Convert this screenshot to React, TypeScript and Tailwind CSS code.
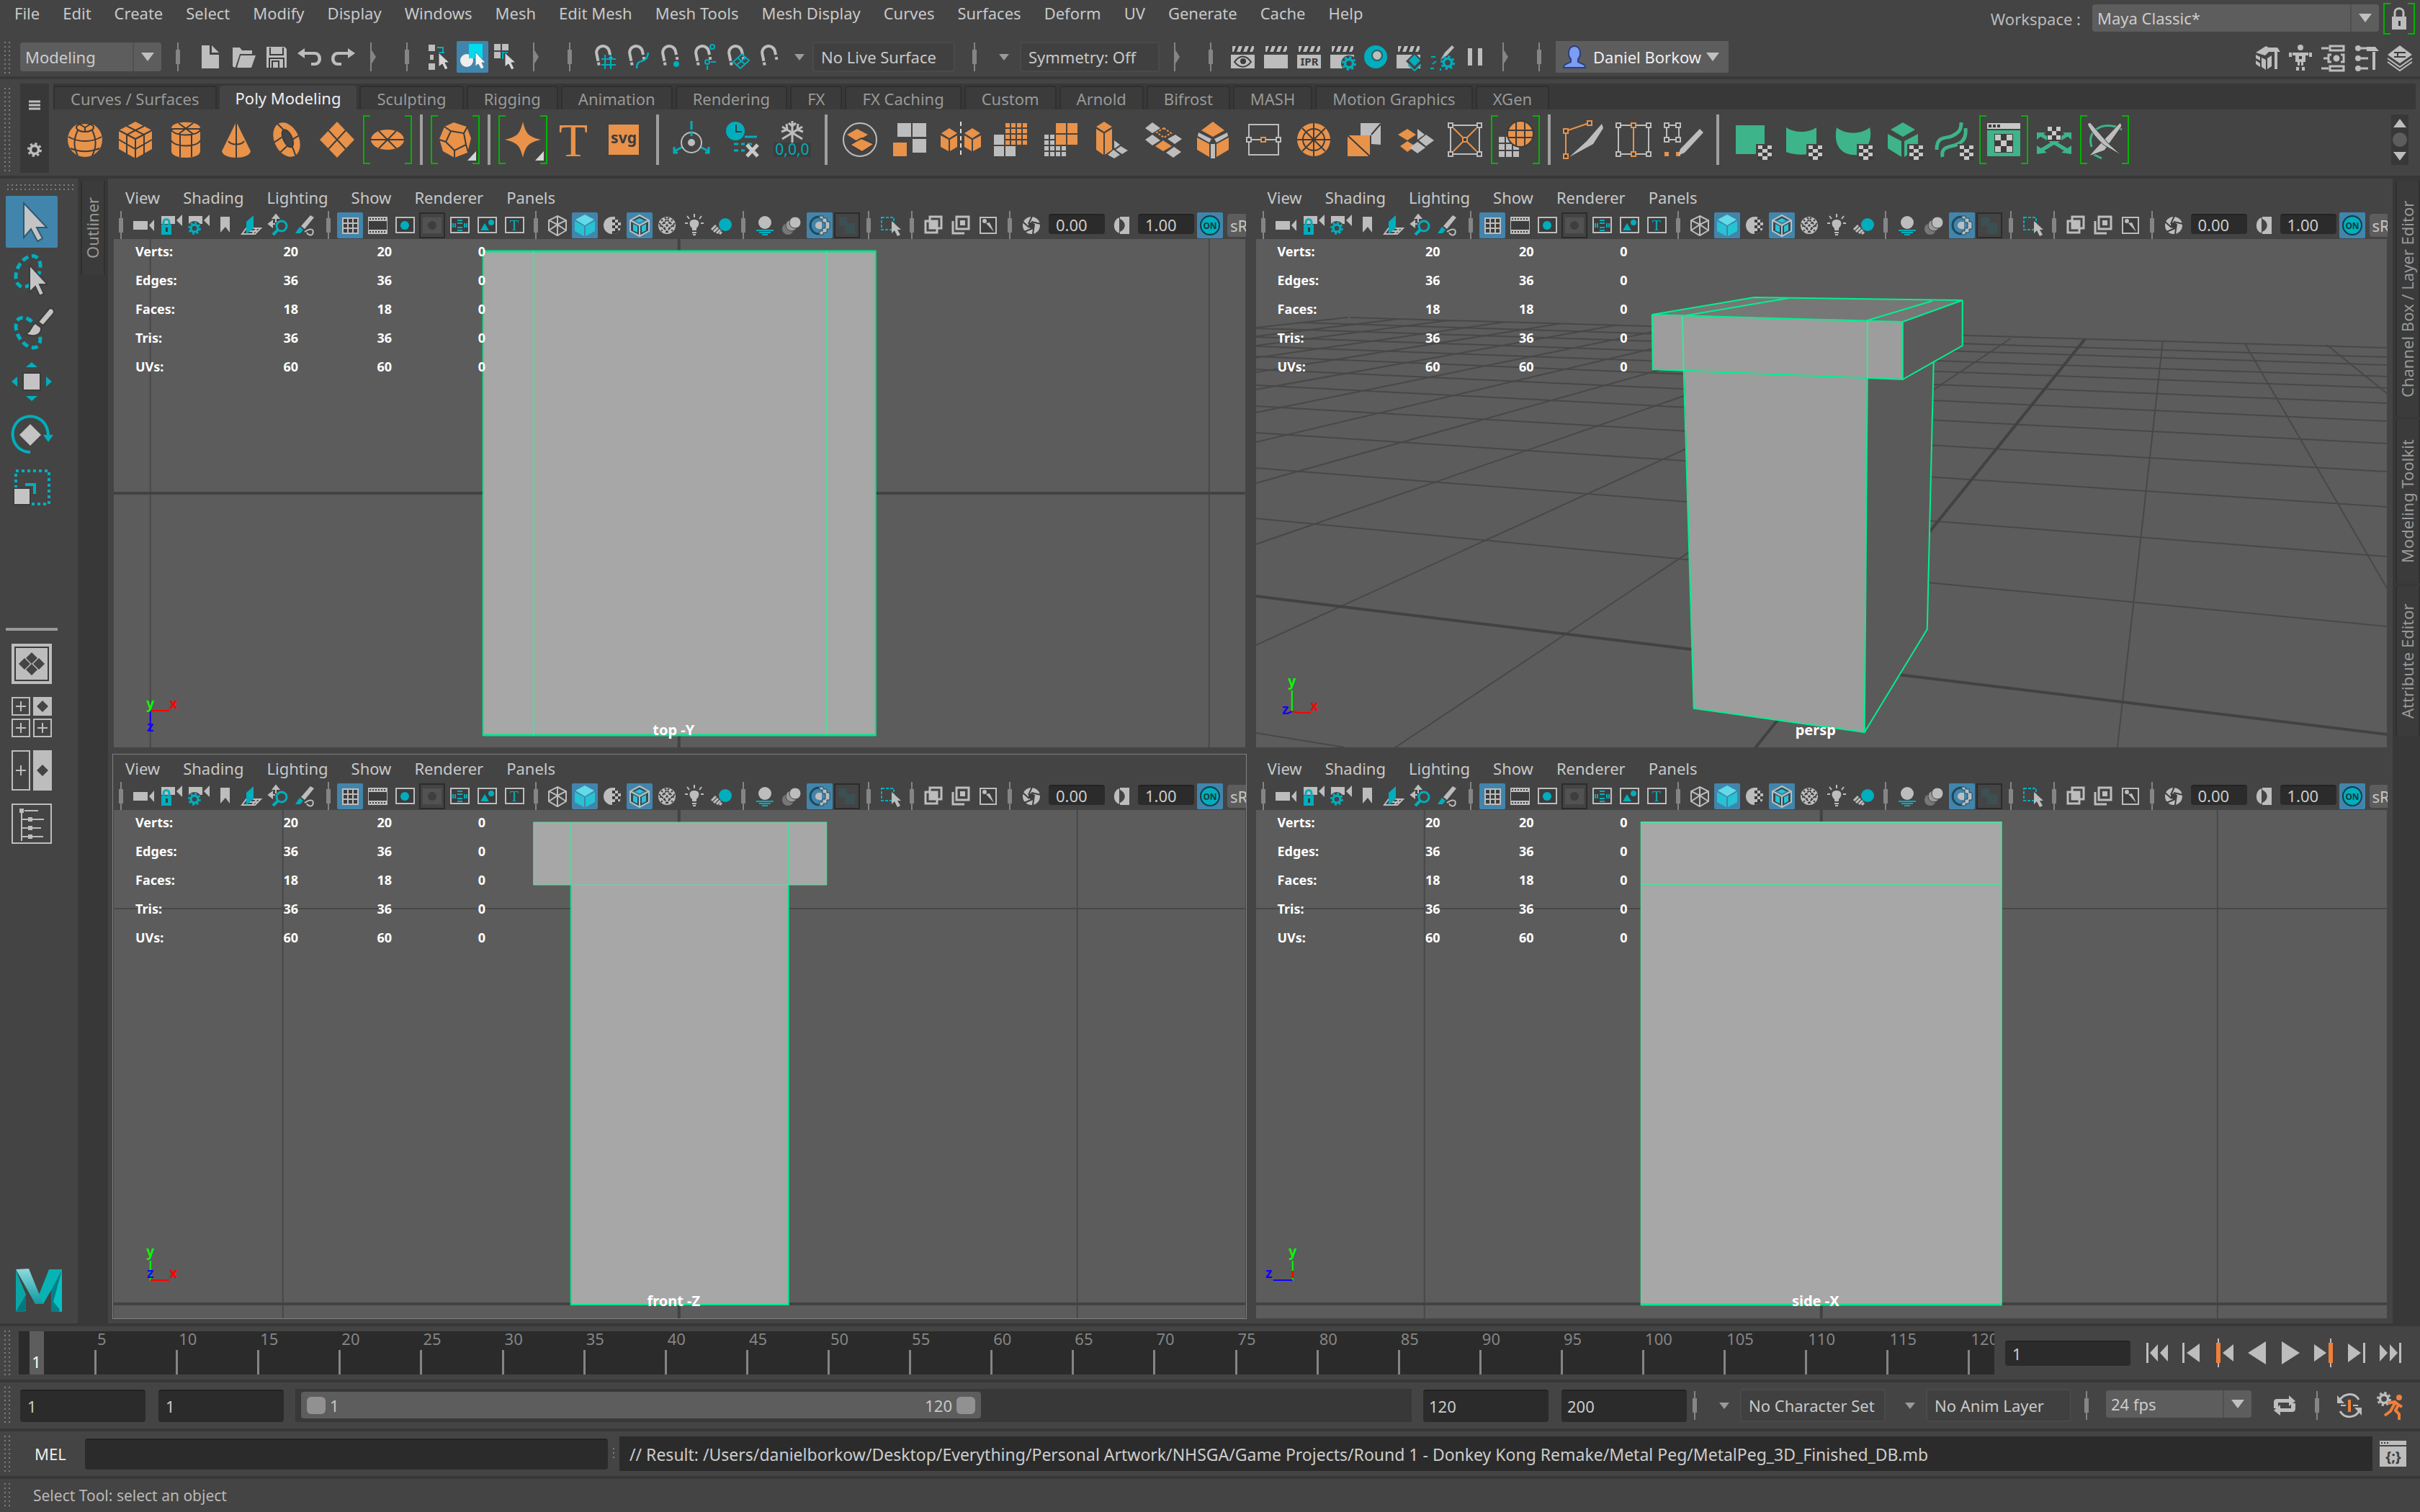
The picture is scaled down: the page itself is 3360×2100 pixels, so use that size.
import type { ReactNode } from "react";
import clsx from "clsx";

const G = "#bdbdbd";
const T = "#00aebd";
const O = "#e8924a";
const D = "#3c3c3c";
const U = "#3db489";

/* ---------- status line icons, 40 x 40 ---------- */

const clap = (
  <>
    <path d="M4 5h31v9H4z" fill={D} />
    <path d="M5 5h5l-3 8H5zM14 5h5l-3 8h-5zM23 5h5l-3 8h-5zM32 5h3v4l-2 4h-4z" fill={G} />
    <path d="M3 17h33v19H3z" fill={G} />
  </>
);

const cursor = <path d="M19 14v20l5-4 4 8 4-2-4-8h6z" fill="#d6d6d6" stroke={D} strokeWidth="1" />;

const magnet = (
  <g transform="rotate(-12 18 18)">
    <path d="M9 24V14a9 9 0 0 1 18 0v5" fill="none" stroke={G} strokeWidth="4" />
    <path d="M7 26h4v4H7zM25 22h4v4h-4z" fill={G} />
  </g>
);

const gear = (cx: number, cy: number, r: number, color: string) => (
  <g fill="none" stroke={color}>
    <circle cx={cx} cy={cy} r={r * 0.62} strokeWidth={r * 0.4} />
    <circle cx={cx} cy={cy} r={r * 0.95} strokeWidth={r * 0.32} strokeDasharray={`${r * 0.37} ${r * 0.376}`} />
  </g>
);

const status: Record<string, ReactNode> = {
  new: <path d="M8 4h11v13h13v19H8zM22 4l10 10H22z" fill={G} />,
  open: <path d="M5 7h10l3 4h14v5H15L9 34l-1 1-3-2zM16 18h21l-6 17H11z" fill={G} />,
  save: (
    <>
      <path d="M6 6h25l3 3v26H6z" fill={G} />
      <path d="M11 7v10h18V7M10 36V22h20v14M14 35v-9h9v9" fill="none" stroke={D} strokeWidth="2" />
    </>
  ),
  undo: <path d="M3 15l10-7v5h14c12 0 12 19 0 19h-5v-4h5c6 0 6-11 0-11H13v5z" fill={G} />,
  redo: <path d="M37 15L27 8v5H13C1 13 1 32 13 32h5v-4h-5c-6 0-6-11 0-11h14v5z" fill={G} />,
  hier: (
    <>
      <path d="M5 3h9v9H5zM5 29h9v9H5zM7 17h5v7H7z" fill={G} />
      <path d="M17 7h8v8M20 27V14h7" fill="none" stroke={T} strokeWidth="2" />
      {cursor}
    </>
  ),
  object: (
    <>
      <circle cx="12" cy="25" r="9" fill="#eee" />
      <path d="M15 2h19v20H15z" fill="#00dcec" />
      <path d="M24 13v20l4-3 4 7 4-2-3-7h5z" fill="#f4f4f4" stroke="#4285ac" />
    </>
  ),
  component: (
    <>
      <path d="M4 2h9v9H4zM15 2h9v9h-9zM4 13h9v9H4z" fill={G} />
      <path d="M16 23v-9h7" fill="none" stroke={T} strokeWidth="2" />
      {cursor}
    </>
  ),
  snapGrid: (
    <>
      {magnet}
      <path d="M20 17v20M28 17v20M15 23h20M15 31h20" stroke={T} strokeWidth="2" />
    </>
  ),
  snapCurve: (
    <>
      {magnet}
      <path d="M18 36c0-16 14-4 16-22" fill="none" stroke={T} strokeWidth="2.5" />
    </>
  ),
  snapPoint: (
    <>
      {magnet}
      <circle cx="27" cy="30" r="4" fill={T} />
    </>
  ),
  snapCenter: (
    <>
      {magnet}
      <g fill="none" stroke={T} strokeWidth="2">
        <circle cx="31" cy="6" r="3" />
        <circle cx="24" cy="27" r="3" />
        <path d="M24 32v6M29 27h7" />
      </g>
    </>
  ),
  snapPlane: (
    <>
      {magnet}
      <path d="M14 27l12-11 10 9-12 11zM20 21l10 9M32 20L18 32" fill="none" stroke={T} strokeWidth="2" />
    </>
  ),
  snapLive: magnet,
  renderView: (
    <>
      {clap}
      <path d="M8 27c7-10 16-10 23 0-7 9-16 9-23 0z" fill="none" stroke={D} strokeWidth="2" />
      <circle cx="20" cy="26" r="4" fill={D} />
    </>
  ),
  render: clap,
  ipr: (
    <>
      {clap}
      <text x="20" y="32" fontSize="15" fontWeight="700" textAnchor="middle" fill={D}>IPR</text>
    </>
  ),
  renderSettings: (
    <>
      {clap}
      <circle cx="29" cy="29" r="11" fill="#444" />
      {gear(29, 29, 9, T)}
    </>
  ),
  hypershade: (
    <>
      <circle cx="20" cy="20" r="16" fill={T} />
      <circle cx="22" cy="18" r="7" fill={G} stroke="#2c5c62" strokeWidth="2" />
    </>
  ),
  renderLayer: (
    <>
      {clap}
      <path d="M28 14l12 12-12 12-12-12z" fill="#444" />
      <path d="M28 17l8 8-8 8-8-8z" fill={T} />
      <path d="M19 31l9 8 9-8" fill="none" stroke={T} strokeWidth="2" />
    </>
  ),
  lightEditor: (
    <>
      <path d="M34 4l3 3-10 11-9 6 6-10z" fill={G} />
      <path d="M5 20h6M7 30l5-4M4 36h5M18 36v3" stroke={T} strokeWidth="2" />
      {gear(28, 28, 9, T)}
    </>
  ),
  pause: <path d="M10 8h6v24h-6zM24 8h6v24h-6z" fill={G} />,
  modelToolkit: (
    <>
      <path d="M4 14L18 5l8 4-9 9zM4 17l6 3v5l-6-3zM12 21l6 3v14l-6-4zM4 25l6 4v5l-6-4zM20 22l6-4v15l-6 4z" fill={G} />
      <path d="M22 7h12l4 6H22zM30 13h4v24h-4z" fill={G} />
    </>
  ),
  humanIk: (
    <>
      <circle cx="20" cy="7" r="4" fill={G} />
      <path d="M4 14h4v6H4zM32 14h4v6h-4zM9 14h22v4h-4v9h-3v5h-3v-5h-2v5h-3v-5h-3v-9H9zM14 34h4v5h-4zM22 34h4v5h-4z" fill={G} />
      <path d="M18 19h4v4h-4z" fill={D} />
    </>
  ),
  attrEditor: (
    <g fill="none" stroke={G} strokeWidth="3">
      <path d="M15 5h19v6H15zM15 33h19v6H15zM3 8h10M3 36h10M6 22h7M17 17h-4v10h4M30 17h4v10h-4" />
      <circle cx="24" cy="22" r="3" fill={G} />
    </g>
  ),
  toolSettings: (
    <>
      <circle cx="8" cy="8" r="4" fill={G} />
      <circle cx="8" cy="22" r="4" fill={G} />
      <circle cx="8" cy="36" r="4" fill={G} />
      <path d="M12 8h10M12 22h10M12 36h10" stroke={G} strokeWidth="3" />
      <path d="M20 6h12l5 6H20zM28 13h4v25h-4z" fill={G} />
    </>
  ),
  channelBox: (
    <>
      <path d="M20 4l17 13-17 12L3 17z" fill={G} />
      <path d="M3 22l17 12 17-12M3 27l17 12 17-12" fill="none" stroke={G} strokeWidth="2" />
      <path d="M12 14h16M12 20h16M17 14v6" stroke={D} strokeWidth="2" />
    </>
  ),
};

/* ---------- shelf icons, 64 x 64 ---------- */

const checker = (
  <>
    <path d="M38 38h24v24H38z" fill="#444" />
    <path d="M41 40h20v20H41z" fill={D} />
    <path d="M41 40h6v5h-6zM54 40h6v5h-6zM47 45h7v5h-7zM41 50h6v5h-6zM54 50h6v5h-6zM47 55h7v5h-7z" fill="#c8c8c8" />
  </>
);

const box = (x: number, y: number, color = G) => (
  <path key={`${x}-${y}`} d={`M${x - 3} ${y - 3}h6v6h-6z`} fill={D} stroke={color} strokeWidth="2" />
);

const cells = (x: number, y: number, n: number, s: number, color: string) =>
  Array.from({ length: n * n }, (_, i) => (
    <rect key={i} x={x + (i % n) * (s + 2)} y={y + Math.floor(i / n) * (s + 2)} width={s} height={s} fill={color} />
  ));

const shelf: Record<string, ReactNode> = {
  sphere: (
    <>
      <circle cx="32" cy="32" r="24" fill={O} />
      <g fill="none" stroke={D} strokeWidth="2">
        <ellipse cx="32" cy="15" rx="12" ry="6" />
        <path d="M9 28c14 8 32 8 46 0M12 44c14 6 26 6 40 0M22 19c-6 12-6 24 0 35M42 19c6 12 6 24 0 35M32 15L22 9M32 15l10-6M32 15v6" />
      </g>
    </>
  ),
  cube: (
    <>
      <path d="M32 7l23 12v26L32 58 9 45V19z" fill={O} />
      <path d="M9 19l23 12 23-12M32 31v27M20 13l24 12v27M44 13L20 25v27M9 32l23 13 23-13" fill="none" stroke={D} strokeWidth="2" />
    </>
  ),
  cylinder: (
    <>
      <path d="M12 16c0-11 40-11 40 0v32c0 12-40 12-40 0z" fill={O} />
      <path d="M12 18c3 10 37 10 40 0M12 33c3 10 37 10 40 0M24 25v31M40 25v31M12 17h40M22 9l20 15M42 9L22 24" fill="none" stroke={D} strokeWidth="2" />
    </>
  ),
  cone: (
    <>
      <path d="M32 7l20 41c-2 12-38 12-40 0z" fill={O} />
      <path d="M32 8v49M21 34c4 6 18 6 22 0" fill="none" stroke={D} strokeWidth="2" />
    </>
  ),
  torus: (
    <g transform="rotate(-25 32 32)">
      <ellipse cx="32" cy="32" rx="17" ry="25" fill={O} />
      <ellipse cx="34" cy="31" rx="6" ry="13" fill="#444" stroke={D} strokeWidth="2" />
      <path d="M15 28l13-2M17 44l13-4M34 57l1-13M49 34l-9 1M30 7l4 11" stroke={D} strokeWidth="2" />
    </g>
  ),
  plane: (
    <>
      <path d="M32 7l24 25-24 25L8 32z" fill={O} />
      <path d="M20 19l24 26M44 19L20 45" stroke={D} strokeWidth="2" />
    </>
  ),
  disc: (
    <>
      <ellipse cx="32" cy="32" rx="23" ry="14" fill={O} />
      <path d="M9 32h46M20 20l24 24M44 20L20 44" stroke={D} strokeWidth="2" />
    </>
  ),
  platonic: (
    <>
      <path d="M30 8l18 6 6 16-5 20-18 7-16-9-5-17 7-17z" fill={O} />
      <path d="M26 20l18 3 3 16-16 8-12-12zM26 20L17 14M44 23l5-9M47 39l3 10M31 47v10M19 35l-9-3" fill="none" stroke={D} strokeWidth="2" />
      <path d="M61 48v13H49z" fill="#d6d6d6" />
    </>
  ),
  superShape: (
    <>
      <path d="M32 7c4 17 8 21 25 25-17 4-21 8-25 25-4-17-8-21-25-25 17-4 21-8 25-25z" fill={O} />
      <path d="M61 48v13H49z" fill="#d6d6d6" />
    </>
  ),
  type: <text x="32" y="55" fontSize="66" textAnchor="middle" fill={O} className="font-['Liberation_Serif',serif]">T</text>,
  svg: (
    <>
      <path d="M11 11h42v42H11z" fill={O} />
      <text x="32" y="37" fontSize="21" fontWeight="700" textAnchor="middle" fill={D}>svg</text>
    </>
  ),
  pivot: (
    <>
      <path d="M32 6v12M8 48l12-6M56 48l-12-6M8 42v8h5M56 42v8h-5" fill="none" stroke={T} strokeWidth="3" />
      <circle cx="32" cy="36" r="14" fill="none" stroke={G} strokeWidth="2" />
      <circle cx="32" cy="36" r="5" fill={G} />
      <path d="M32 20v7" stroke={T} strokeWidth="3" />
    </>
  ),
  history: (
    <>
      <circle cx="23" cy="20" r="13" fill={T} />
      <path d="M24 11v10h8" fill="none" stroke={D} strokeWidth="2" />
      <path d="M36 28h17M21 38h6M31 38h5M40 38h6M21 47h6M31 47h5" stroke={T} strokeWidth="3" />
      <path d="M39 39l15 16M54 39L39 55" stroke="#c8c8c8" strokeWidth="5" />
    </>
  ),
  freeze: (
    <>
      <path d="M32 6v32M18 14l28 17M46 14L18 31M27 9l5 4 5-4M17 21l8-3-1-8M47 21l-8-3 1-8" fill="none" stroke={G} strokeWidth="3" />
      <path d="M6 36h52v20H6z" fill={D} />
      <text x="32" y="53" fontSize="21" textAnchor="middle" fill={T}>0,0,0</text>
    </>
  ),
  combine: (
    <>
      <circle cx="32" cy="32" r="23" fill="none" stroke={G} strokeWidth="2" />
      <path d="M28 17l15 8-15 9-14-9z" fill={O} />
      <path d="M34 30l18 8-17 11-17-10z" fill={O} stroke={D} strokeWidth="2" />
    </>
  ),
  separate: (
    <>
      <path d="M14 9h19v19H14zM35 9h19v19H35zM35 31h19v19H35z" fill={G} />
      <path d="M8 36h19v19H8z" fill={O} />
    </>
  ),
  mirror: (
    <>
      <path d="M16 16l11 7-11 7-11-7zM4 26l11 6v16L4 42zM17 32l10-6v16l-10 6zM48 16l11 7-11 7-11-7zM37 26l10 6v16l-10-6zM49 32l11-6v16l-11 6z" fill={O} />
      <path d="M32 7v50" stroke="#ddd" strokeWidth="2" strokeDasharray="6 4" />
    </>
  ),
  smooth: <>{cells(8, 25, 2, 14, G)}<path d="M22 7h34v33H22z" fill="#444" />{cells(24, 9, 4, 6, O)}</>,
  reduce: <>{cells(8, 25, 4, 6, G)}<path d="M22 7h34v33H22z" fill="#444" />{cells(24, 9, 2, 14, O)}</>,
  extrude: (
    <>
      <path d="M21 7l11 7-11 7-11-7zM10 17l10 6v30l-10-7zM22 23l10-6v29l-10 7z" fill={O} />
      <path d="M35 33l8 6-7 5-1-1zM44 41l10 6-8 5-9-6zM34 46l9 7-8 5-9-5z" fill={G} />
    </>
  ),
  bridge: (
    <>
      <path d="M18 8l11 8-11 7-10-7zM50 25l9 6-10 7-10-7zM18 25l11 8-11 7-10-8zM48 42l10 7-11 8-10-7z" fill={G} />
      <path d="M34 16l10 7-10 6-10-7z" fill="none" stroke={O} strokeWidth="2" strokeDasharray="3 2" />
      <path d="M33 33l12 8-12 7-11-7z" fill={O} />
    </>
  ),
  bevel: (
    <>
      <path d="M32 7l16 12-16 9-16-9zM10 29l17 9v18L10 46zM54 29l-17 9v18l17-10z" fill={O} />
      <path d="M12 22l18 9-3 5-16-9zM52 22l-18 9 3 5 16-9zM29 38h6v20h-6z" fill={G} />
    </>
  ),
  connect: (
    <>
      <path d="M12 11h41v42H12zM12 32h41" fill="none" stroke={G} strokeWidth="2" />
      {box(12, 32)}{box(53, 32)}{box(32, 32, O)}
    </>
  ),
  circularize: (
    <>
      <circle cx="32" cy="32" r="23" fill={O} />
      <circle cx="32" cy="32" r="15" fill="none" stroke={D} strokeWidth="2" />
      <path d="M9 32h46M32 9v46M16 16l32 32M48 16L16 48" stroke={D} strokeWidth="2" />
    </>
  ),
  flip: (
    <>
      <path d="M27 9h28v30L42 38V26H27z" fill={G} />
      <path d="M42 25L55 10" stroke={D} strokeWidth="2" />
      <path d="M9 26h31v29H9z" fill={O} />
      <path d="M9 26l31 29" stroke={D} strokeWidth="2" />
    </>
  ),
  quads: (
    <>
      <path d="M22 17l12 8-12 8-13-8zM22 34l11 7-11 8-10-8z" fill={O} />
      <path d="M36 17l10 8-10 7M48 25l11 8-11 8-10-8zM36 35l11 8-11 8-11-8z" fill={G} />
    </>
  ),
  lattice: (
    <>
      <path d="M12 12h40v40H12z" fill="none" stroke={G} strokeWidth="2" />
      <path d="M16 16l32 32M48 16L16 48" stroke={O} strokeWidth="2" />
      {box(12, 12)}{box(52, 12)}{box(12, 52)}{box(52, 52)}{box(32, 32, O)}
    </>
  ),
  booleans: (
    <>
      {cells(9, 28, 3, 8, G)}
      <circle cx="39" cy="24" r="18" fill={O} stroke={D} strokeWidth="2" />
      <path d="M21 19h36M22 29h34M33 7v34M45 7v34" stroke={D} strokeWidth="2" />
    </>
  ),
  multiCut: (
    <>
      <path d="M8 54V20L40 9" fill="none" stroke={O} strokeWidth="2" />
      {box(8, 20, O)}{box(41, 9, O)}{box(8, 55, O)}
      <path d="M58 10l2 6-14 22-33 18 24-22z" fill={G} />
    </>
  ),
  edgeLoop: (
    <>
      <path d="M11 12h42M11 52h42M11 12v40M53 12v40" fill="none" stroke={G} strokeWidth="2" />
      <path d="M32 12v40" stroke={O} strokeWidth="2" />
      {box(11, 12)}{box(53, 12)}{box(11, 52)}{box(53, 52)}{box(32, 12, O)}{box(32, 52, O)}
    </>
  ),
  quadDraw: (
    <>
      <path d="M8 12h17M8 32h17M8 12v20M25 12v20" fill="none" stroke={G} strokeWidth="2" />
      {box(8, 12)}{box(24, 12)}{box(8, 32)}{box(24, 32)}
      <path d="M5 49h6v6H5zM21 49h6v6h-6z" fill={O} />
      <path d="M54 17l5 5-26 28-9 4 3-9z" fill={G} />
    </>
  ),
  uvPlanar: <><path d="M10 12h40v40H10z" fill={U} />{checker}</>,
  uvCylinder: <><path d="M10 15c12 8 30 8 42 0v34c-12 5-30 5-42 0z" fill={U} />{checker}</>,
  uvSphere: <><path d="M10 15c12 10 34 10 46 0 4 14-2 32-16 38-18 2-36-8-30-38z" fill={U} />{checker}</>,
  uvAuto: (
    <>
      <path d="M32 8l17 10-17 10-17-10zM11 24l19 10v22L11 44zM53 24L34 34v22l19-12z" fill={U} />
      {checker}
    </>
  ),
  uvContour: (
    <>
      <path d="M9 46C9 24 24 32 32 26 40 22 43 18 43 8M17 56C14 38 32 44 42 36 48 32 50 26 49 16" fill="none" stroke={U} strokeWidth="5" />
      {checker}
    </>
  ),
  uvEditor: (
    <>
      <path d="M9 9h46v8H9z" fill="#c8c8c8" />
      <path d="M11 11h4v4h-4zM17 11h4v4h-4zM23 11h4v4h-4z" fill={D} />
      <path d="M9 19h46v36H9z" fill={U} />
      <path d="M19 24h26v26H19z" fill={D} />
      <path d="M20 25h8v8h-8zM36 25h8v8h-8zM28 33h8v8h-8zM20 41h8v8h-8zM36 41h8v8h-8z" fill="#c8c8c8" />
    </>
  ),
  uvUnfold: (
    <>
      <path d="M12 48l40-24M52 48L12 24" stroke={U} strokeWidth="5" />
      <path d="M8 52V40l14 10zM56 52V40L42 50zM8 22h12L8 32zM56 22H44l12 10z" fill={U} />
      <path d="M22 14h20v20H22z" fill={D} />
      <path d="M23 14h6v6h-6zM35 14h6v6h-6zM29 20h6v6h-6zM23 26h6v6h-6zM35 26h6v6h-6z" fill="#c8c8c8" />
    </>
  ),
  uvCut: (
    <>
      <path d="M14 42c-6-20 10-34 34-28l8 4M16 52l12 6" fill="none" stroke={U} strokeWidth="3" />
      <path d="M54 8l2 5-24 34-22 8 22-24z" fill={G} stroke={D} />
      <path d="M8 10l4-2 24 28 20 18-24-14C24 34 12 20 8 10z" fill={G} stroke={D} />
    </>
  ),
};

/* ---------- viewport toolbar icons, 36 x 36 ---------- */

const cam = <path d="M6 5h19v11H6zM27 11l8-8v16z" fill={G} />;

const panelIcons: Record<string, ReactNode> = {
  camera: <path d="M5 12h20v12H5zM27 18l7-8v16z" fill={G} />,
  lockCamera: (
    <>
      {cam}
      <path d="M6 17h14v14H6z" fill={T} />
      <path d="M9 18v-4c0-6 8-6 8 0v4" fill="none" stroke={T} strokeWidth="3" />
      <path d="M12 21h3v6h-3z" fill={D} />
    </>
  ),
  cameraSettings: <>{cam}<circle cx="14" cy="22" r="10" fill="#444" />{gear(14, 22, 8, T)}</>,
  bookmark: <path d="M12 6h13v22l-6-8-7 8z" fill={G} />,
  imagePlane: (
    <>
      <path d="M4 30l6-8h20l-8 8zM14 26h12M18 30l7-8" fill="none" stroke={G} strokeWidth="2" />
      <path d="M10 13l10-9v18l-10 8z" fill={T} />
    </>
  ),
  panZoom: (
    <>
      <path d="M13 14V8M12 16H5M8 12l-5 4 5 4zM9 8l4-5 4 5z" fill={G} stroke={G} strokeWidth="2" />
      <circle cx="21" cy="19" r="7" fill="none" stroke={T} strokeWidth="3" />
      <path d="M16 24l-7 7" stroke={T} strokeWidth="4" />
    </>
  ),
  grease: (
    <>
      <path d="M23 4l5 3-13 16-5-4z" fill={G} />
      <path d="M8 20l5 4-4 5H2z" fill={T} />
      <path d="M15 27c8-6 14-4 11 3-2 3-7 1-8-2" fill="none" stroke={G} strokeWidth="2" />
    </>
  ),
  grid: <><path d="M7 7h23v23H7z" fill={G} />{cells(9, 9, 3, 5, D)}</>,
  filmGate: (
    <>
      <path d="M5 6h27v24H5z" fill={G} />
      <path d="M6 12h25v12H6z" fill={D} />
      <path d="M7 9h24M7 27h24" stroke={D} strokeWidth="2" strokeDasharray="2 2" />
    </>
  ),
  resGate: <><path d="M6 7h25v21H6z" fill={D} stroke={G} strokeWidth="2" /><circle cx="18" cy="18" r="6" fill={T} /></>,
  gateMask: (
    <>
      <path d="M1 1h34v34H1z" fill="none" stroke="#2b2b2b" strokeWidth="2" />
      <path d="M5 7h26v22H5z" fill="#525252" />
      <circle cx="18" cy="18" r="6" fill="#3e3e3e" />
    </>
  ),
  fieldChart: (
    <>
      <path d="M6 7h25v21H6z" fill={D} stroke={G} strokeWidth="2" />
      <path d="M15 11h7M15 15h7M15 21h7M15 25h7M9 15v6M12 15v6M25 15v6M28 15v6" stroke={T} strokeWidth="2" />
    </>
  ),
  safeAction: (
    <>
      <path d="M6 7h25v21H6z" fill={D} stroke={G} strokeWidth="2" />
      <path d="M9 25l6-10 6 10z" fill={T} />
      <circle cx="24" cy="14" r="4" fill={T} />
    </>
  ),
  safeTitle: (
    <>
      <path d="M6 7h25v21H6z" fill={D} stroke={G} strokeWidth="2" />
      <text x="18" y="25" fontSize="20" textAnchor="middle" fill={T} className="font-['Liberation_Serif',serif]">T</text>
    </>
  ),
  wireframe: (
    <path d="M18 5l12 6v14l-12 7-12-7V11zM6 11l12 6 12-6M18 5v27M6 25l12-8 12 8" fill="none" stroke={G} strokeWidth="2" />
  ),
  shaded: (
    <>
      <path d="M18 3l13 7-13 8L5 10z" fill="#62dbe8" />
      <path d="M4 12l13 7v14L4 26z" fill="#27c3d2" />
      <path d="M32 12l-13 7v14l13-7z" fill="#27c3d2" />
    </>
  ),
  material: (
    <>
      <circle cx="18" cy="18" r="12" fill={G} />
      <path d="M18 6a12 12 0 0 1 0 24z" fill={D} />
      <path d="M18 6h4v4h-4zM22 10h4v4h-4zM18 14h4v4h-4zM26 14h4v4h-4zM22 18h4v4h-4zM18 22h4v4h-4zM26 22h3v3h-3z" fill={G} />
    </>
  ),
  wireOnShaded: (
    <>
      <path d="M18 4l13 7v15l-13 7-13-7V11zM5 11l13 7 13-7M18 18v15" fill="#2f4c5a" stroke={G} strokeWidth="2" />
      <path d="M18 8l6 3-6 3-6-3zM9 16l6 3v9l-6-3zM27 16l-6 3v9l6-3z" fill="#27c3d2" />
    </>
  ),
  textured: (
    <>
      <circle cx="18" cy="18" r="12" fill={G} />
      <path d="M10 10l16 16M7 15l14 14M15 7l14 14M26 10L10 26M29 15L15 29M21 7L7 21" stroke={D} strokeWidth="2" strokeDasharray="3 2" />
    </>
  ),
  lights: (
    <>
      <path d="M18 10c9 0 7 9 3 12v3h-6v-3c-4-3-6-12 3-12z" fill={G} />
      <path d="M18 2v5M8 5l3 4M28 5l-3 4M5 15h4M27 15h4M15 28h6M16 31h4" stroke={G} strokeWidth="2" />
    </>
  ),
  shadows: (
    <>
      <circle cx="23" cy="17" r="9" fill={T} />
      <path d="M4 24l6-6M7 27l6-6M11 29l5-5M15 30l3-3" stroke={G} strokeWidth="3" />
    </>
  ),
  ao: (
    <>
      <circle cx="18" cy="14" r="9" fill={G} />
      <path d="M6 25h24M10 28h16M14 31h8" stroke={T} strokeWidth="2" />
    </>
  ),
  motionBlur: (
    <>
      <circle cx="12" cy="23" r="8" fill="#777" />
      <circle cx="17" cy="18" r="8" fill="#999" stroke="#444" />
      <circle cx="22" cy="14" r="8" fill={G} stroke="#444" />
    </>
  ),
  aa: (
    <>
      <path d="M17 6a12 12 0 0 0 0 24" fill="none" stroke="#1d4a5c" strokeWidth="3" />
      <path d="M17 13a5 5 0 0 0 0 10z" fill={G} />
      <path d="M18 5h5v3h5v5h4v10h-4v5h-5v3h-5v-5h4v-4h4v-8h-4v-5h-4z" fill={G} stroke="#1d4a5c" />
      <path d="M17 13h4v10h-4z" fill={G} />
    </>
  ),
  dof: (
    <>
      <path d="M1 1h34v34H1z" fill="none" stroke="#2b2b2b" strokeWidth="2" />
      <path d="M7 7h11v12H7zM15 15h14v14H15z" fill="#3c5054" />
    </>
  ),
  isolate: (
    <>
      <path d="M6 7h17v17H6z" fill="none" stroke={T} strokeWidth="2" strokeDasharray="4 2" />
      <path d="M20 12v17l4-4 4 8 4-2-4-7h5z" fill={G} />
    </>
  ),
  xray: (
    <>
      <path d="M13 6h16v16H13zM7 12h16v16H7z" fill="none" stroke={G} strokeWidth="3" />
      <path d="M14 13h8v8h-8z" fill={G} />
    </>
  ),
  xrayJoints: (
    <>
      <path d="M12 6h17v17H12zM7 12v17h16" fill="none" stroke={G} strokeWidth="3" />
      <path d="M17 11h7v7h-7z" fill={G} />
    </>
  ),
  xrayActive: (
    <>
      <path d="M7 7h22v22H7z" fill={D} stroke={G} strokeWidth="2" />
      <path d="M15 15l5-1 6 13z" fill={G} />
      <circle cx="13" cy="12" r="3" fill={G} />
    </>
  ),
  exposure: (
    <>
      <circle cx="18" cy="18" r="12" fill={G} />
      <path d="M18 13l13 3M22 16l-2 14M20 22L8 27M15 21L6 13M14 16l5-11" stroke={D} strokeWidth="2" />
      <circle cx="18" cy="18" r="4" fill={D} />
    </>
  ),
  gamma: (
    <>
      <path d="M16 7a12 12 0 0 0 0 22z" fill={G} />
      <path d="M17 6h13v24H17v-3c9-4 9-14 0-18z" fill={G} />
    </>
  ),
  colorMgmt: (
    <>
      <circle cx="18" cy="18" r="13" fill={T} stroke="#123c44" strokeWidth="2" />
      <text x="18" y="23" fontSize="12" fontWeight="700" textAnchor="middle" fill="#123c44">ON</text>
    </>
  ),
};

/* ---------- small shared pieces ---------- */

function IconButton({
  label,
  size = "md",
  active,
  bracket,
  children,
}: {
  label: string;
  size?: "sm" | "md" | "lg" | "xl";
  active?: boolean;
  bracket?: boolean;
  children: ReactNode;
}) {
  const view = { sm: 36, md: 40, lg: 64, xl: 72 }[size];
  return (
    <button
      type="button"
      aria-label={label}
      className={clsx(
        "relative flex shrink-0 items-center justify-center rounded-xs",
        size === "sm" && "size-9",
        size === "md" && "size-11",
        size === "lg" && "size-[68px]",
        size === "xl" && "size-[72px]",
        active && "bg-[#4285ac]",
      )}
    >
      <svg width={view} height={view} viewBox={`0 0 ${view} ${view}`} className="overflow-visible">
        {children}
      </svg>
      {bracket && <Brackets />}
    </button>
  );
}

function Brackets() {
  return (
    <span className="pointer-events-none absolute inset-0 flex justify-between">
      <span className="w-2.5 border-y-2 border-l-2 border-[#00b400]" />
      <span className="w-2.5 border-y-2 border-r-2 border-[#00b400]" />
    </span>
  );
}

function Handle({ className }: { className?: string }) {
  return (
    <span className={clsx("flex h-10 w-1.5 shrink-0 items-center justify-center", className)}>
      <span className="flex h-full w-0.5 items-center justify-center bg-[#858585]">
        <span className="h-5 w-1.5 shrink-0 bg-[#858585]" />
      </span>
    </span>
  );
}

function Chevron({ className }: { className?: string }) {
  return (
    <svg width="8" height="40" viewBox="0 0 8 40" className={clsx("shrink-0", className)}>
      <path d="M1 0v40" stroke="#858585" strokeWidth="2" />
      <path d="M1 9l7 11-7 11z" fill="#858585" />
    </svg>
  );
}

function Down({ className }: { className?: string }) {
  return (
    <button type="button" aria-label="Open menu" className={clsx("w-5 shrink-0", className)}>
      <svg width="20" height="14" viewBox="0 0 20 14">
        <path d="M3 3h14l-7 9z" fill="#9a9a9a" />
      </svg>
    </button>
  );
}

function Grip() {
  return (
    <span className="my-1 ml-1 w-2.5 shrink-0 self-stretch bg-[radial-gradient(circle,#7d7d7d_1px,transparent_1px)] bg-[size:6px_6px]" />
  );
}

function Dropdown({ id, label, value, className }: { id: string; label: string; value: string; className?: string }) {
  return (
    <span className={clsx("relative flex shrink-0 rounded-sm bg-[#5d5d5d]", className)}>
      <select id={id} aria-label={label} defaultValue={value} className="w-full appearance-none bg-transparent pl-[7px] text-[#cccccc] outline-none">
        <option>{value}</option>
      </select>
      <span className="pointer-events-none absolute inset-y-0 right-0 flex w-10 items-center justify-center border-l-2 border-[#505050]">
        <svg width="20" height="14" viewBox="0 0 20 14">
          <path d="M1 1h18l-9 12z" fill="#c0c0c0" />
        </svg>
      </span>
    </span>
  );
}

function Field({ label, value, className }: { label: string; value: string; className?: string }) {
  return (
    <input
      aria-label={label}
      defaultValue={value}
      className={clsx("min-w-0 shrink-0 rounded-sm border-t-2 border-[#222222] bg-[#2b2b2b] text-[#cccccc] outline-none", className)}
    />
  );
}

function FlatField({ children, className }: { children: ReactNode; className?: string }) {
  return (
    <button type="button" className={clsx("shrink-0 rounded-sm border-2 border-[#4a4a4a] bg-[#404040] pl-2.5 text-left text-[#c8c8c8]", className)}>
      {children}
    </button>
  );
}

/* ---------- top bars ---------- */

const menus = [
  "File", "Edit", "Create", "Select", "Modify", "Display", "Windows", "Mesh", "Edit Mesh", "Mesh Tools",
  "Mesh Display", "Curves", "Surfaces", "Deform", "UV", "Generate", "Cache", "Help",
];

function MenuBar() {
  return (
    <header className="flex h-[52px] items-start">
      <nav className="flex gap-8 pl-5 pt-0.5 leading-8 text-[#c8c8c8]">
        {menus.map((m) => (
          <button type="button" key={m}>{m}</button>
        ))}
      </nav>
      <label htmlFor="workspace" className="ml-auto pt-2.5 leading-8 text-[#bbbbbb]">Workspace :</label>
      <Dropdown id="workspace" label="Workspace" value="Maya Classic*" className="ml-4 mt-1.5 h-[38px] w-[398px]" />
      <button type="button" aria-label="Lock workspace" className="relative ml-1.5 mr-[7px] mt-1 flex size-11 items-center justify-center">
        <svg width="24" height="34" viewBox="0 0 24 34">
          <path d="M2 14h20v18H2z" fill={G} />
          <path d="M6 14V8c0-7 12-7 12 0v6" fill="none" stroke={G} strokeWidth="3" />
          <path d="M11 20h3v7h-3z" fill={D} />
        </svg>
        <Brackets />
      </button>
    </header>
  );
}

function IconGroup({ names, active, className }: { names: string[]; active?: string; className?: string }) {
  return (
    <div className={clsx("flex shrink-0 gap-0.5", className)}>
      {names.map((n) => (
        <IconButton key={n} label={n} active={n === active}>{status[n]}</IconButton>
      ))}
    </div>
  );
}

function StatusLine() {
  return (
    <div className="flex h-[54px] items-center">
      <Grip />
      <Dropdown id="menuset" label="Menu set" value="Modeling" className="ml-3.5 h-10 w-[196px]" />
      <Handle className="mx-5" />
      <IconGroup names={["new", "open", "save", "undo", "redo"]} />
      <Chevron className="ml-4" />
      <Handle className="ml-10 mr-5" />
      <IconGroup names={["hier", "object", "component"]} active="object" />
      <Chevron className="ml-4" />
      <Handle className="ml-10 mr-6" />
      <IconGroup names={["snapGrid", "snapCurve", "snapPoint", "snapCenter", "snapPlane", "snapLive"]} />
      <Down className="ml-2" />
      <FlatField className="ml-2 h-[42px] w-[198px]">No Live Surface</FlatField>
      <Handle className="ml-6" />
      <Down className="ml-7" />
      <FlatField className="ml-3 h-[42px] w-[194px]">Symmetry: Off</FlatField>
      <Chevron className="ml-5" />
      <Handle className="ml-10 mr-5" />
      <IconGroup
        names={["renderView", "render", "ipr", "renderSettings", "hypershade", "renderLayer", "lightEditor", "pause"]}
      />
      <Chevron className="ml-4" />
      <Handle className="ml-10 mr-5" />
      <button type="button" className="flex h-11 w-60 shrink-0 items-center bg-[#5d5d5d] pl-2 text-[#eeeeee]">
        <svg width="36" height="36" viewBox="0 0 36 36">
          <path d="M3 33c0-6 6-5 10-8v-4C8 16 9 3 18 3s10 13 5 18v4c4 3 10 2 10 8z" fill="#7d9cf2" stroke="#27407e" strokeWidth="2" />
        </svg>
        <span className="ml-2">Daniel Borkow</span>
        <svg width="20" height="14" viewBox="0 0 20 14" className="ml-1.5">
          <path d="M1 1h18l-9 12z" fill="#c0c0c0" />
        </svg>
      </button>
      <IconGroup
        className="ml-auto mr-1.5"
        names={["modelToolkit", "humanIk", "attrEditor", "toolSettings", "channelBox"]}
      />
    </div>
  );
}

const shelfTabs = [
  "Curves / Surfaces", "Poly Modeling", "Sculpting", "Rigging", "Animation", "Rendering", "FX", "FX Caching",
  "Custom", "Arnold", "Bifrost", "MASH", "Motion Graphics", "XGen",
];

const shelfGroups = [
  ["sphere", "cube", "cylinder", "cone", "torus", "plane", "disc"],
  ["platonic"],
  ["superShape", "type", "svg"],
  ["pivot", "history", "freeze"],
  [
    "combine", "separate", "mirror", "smooth", "reduce", "extrude", "bridge", "bevel", "connect", "circularize",
    "flip", "quads", "lattice", "booleans",
  ],
  ["multiCut", "edgeLoop", "quadDraw"],
  ["uvPlanar", "uvCylinder", "uvSphere", "uvAuto", "uvContour", "uvEditor", "uvUnfold", "uvCut"],
];

const bracketed = ["disc", "platonic", "superShape", "booleans", "uvEditor", "uvCut"];

function Shelf() {
  return (
    <div className="flex h-[134px] pt-1.5">
      <Grip />
      <div className="mb-1 ml-3.5 flex w-10 shrink-0 flex-col items-center bg-[#383838]">
        <button type="button" aria-label="Shelf menu" className="mt-[18px]">
          <svg width="24" height="24" viewBox="0 0 24 24">
            <path d="M4 7h16M4 12h16M4 17h16" stroke={G} strokeWidth="3" />
          </svg>
        </button>
        <button type="button" aria-label="Shelf settings" className="mt-[38px]">
          <svg width="24" height="24" viewBox="0 0 24 24">{gear(12, 12, 9, G)}</svg>
        </button>
      </div>
      <div className="mx-1.5 min-w-0 flex-1">
        <div role="tablist" className="flex h-9 items-end gap-1 bg-[#383838]">
          {shelfTabs.map((t, i) => (
            <button
              type="button"
              role="tab"
              key={t}
              aria-selected={i === 1}
              className={clsx(
                "h-[33px] rounded-t-sm px-[22px]",
                i === 1
                  ? "bg-[#444444] leading-8 text-[#eeeeee]"
                  : "border-x-2 border-t-2 border-[#303030] bg-[#3b3b3b] leading-7 text-[#999999]",
              )}
            >
              {t}
            </button>
          ))}
        </div>
        <div className="flex h-[84px] items-center">
          <div className="flex items-center gap-0.5 pl-2.5">
            {shelfGroups.map((group, i) => (
              <div key={group[0]} className="flex items-center gap-0.5">
                {i > 0 && <span className="mx-[9px] h-[70px] w-1 bg-[#a0a0a0]" />}
                {group.map((n) => (
                  <IconButton key={n} label={n} size="lg" bracket={bracketed.includes(n)}>{shelf[n]}</IconButton>
                ))}
              </div>
            ))}
          </div>
          <div className="ml-auto mr-2.5 flex h-[70px] w-6 flex-col items-center justify-between bg-[#383838] py-1">
            <svg width="20" height="16" viewBox="0 0 20 16"><path d="M10 2l9 12H1z" fill={G} /></svg>
            <span className="size-5 rounded-full bg-[#5d5d5d]" />
            <svg width="20" height="16" viewBox="0 0 20 16"><path d="M10 14L1 2h18z" fill={G} /></svg>
          </div>
        </div>
      </div>
    </div>
  );
}

/* ---------- left tool box ---------- */

const tools: Record<string, ReactNode> = {
  select: <path d="M25 10v48l10-12 9 17 7-4-8-15h14z" fill="#c4c4c4" stroke="#2f5870" strokeWidth="2" />,
  lasso: (
    <>
      <ellipse cx="31" cy="31" rx="15" ry="23" transform="rotate(28 31 31)" fill="none" stroke={T} strokeWidth="5" strokeDasharray="9 5" />
      <path d="M33 22v38l8-8 6 13 6-3-6-13h11z" fill="#c4c4c4" stroke={D} strokeWidth="2" />
    </>
  ),
  paint: (
    <>
      <ellipse cx="31" cy="42" rx="14" ry="23" transform="rotate(-32 31 42)" fill="none" stroke={T} strokeWidth="5" strokeDasharray="9 5" />
      <path d="M60 9c4-2 10 2 5 8L52 32l-7-5zM41 29l8 6c1 10-9 14-22 9 9-3 7-11 14-15z" fill="#c4c4c4" stroke={D} strokeWidth="2" />
    </>
  ),
  move: (
    <>
      <path d="M24 24h24v24H24z" fill="#c4c4c4" stroke={D} strokeWidth="2" />
      <path d="M36 9l8 7H28zM36 63l8-7H28zM8 36l8-7v14zM64 36l-8-7v14z" fill={T} />
    </>
  ),
  rotate: (
    <>
      <path d="M34 60C12 60 2 34 16 18 30 3 59 10 59 38" fill="none" stroke={T} strokeWidth="4" />
      <path d="M52 36h14l-7 10z" fill={T} />
      <path d="M34 21l15 15-15 15-15-15z" fill="#c4c4c4" />
    </>
  ),
  scale: (
    <>
      <path d="M14 12h46v46H14z" fill="none" stroke={T} strokeWidth="4" strokeDasharray="4 4" />
      <path d="M27 31h13v13" fill="none" stroke={T} strokeWidth="4" />
      <path d="M11 36h23v23H11z" fill="#c4c4c4" stroke={D} strokeWidth="2" />
    </>
  ),
};

const diamond = (cx: number, cy: number, r: number) => (
  <path d={`M${cx} ${cy - r}l${r} ${r}-${r} ${r}-${r}-${r}z`} fill="#444444" />
);

const layouts: Record<string, ReactNode> = {
  single: (
    <>
      <path d="M8 8h56v56H8z" fill={G} />
      <path d="M13 13h46v46H13z" fill="none" stroke={D} strokeWidth="2" />
      {diamond(36, 28, 8)}{diamond(36, 44, 8)}{diamond(26, 36, 8)}{diamond(46, 36, 8)}
    </>
  ),
  four: (
    <>
      <path d="M9 9h24v24H9zM9 39h24v24H9zM39 39h24v24H39z" fill="none" stroke={G} strokeWidth="2" />
      <path d="M38 8h26v26H38z" fill={G} />
      {diamond(51, 21, 8)}
      <path d="M14 21h14M21 14v14M14 51h14M21 44v14M44 51h14M51 44v14" stroke={G} strokeWidth="2" />
    </>
  ),
  two: (
    <>
      <path d="M9 9h24v54H9z" fill="none" stroke={G} strokeWidth="2" />
      <path d="M38 8h26v56H38z" fill={G} />
      {diamond(51, 36, 8)}
      <path d="M14 36h14M21 29v14" stroke={G} strokeWidth="2" />
    </>
  ),
  outliner: (
    <>
      <path d="M9 9h54v54H9zM22 18v42" fill="none" stroke={G} strokeWidth="2" />
      <path d="M26 18h19M22 30h31M22 42h27M22 54h30" stroke={G} strokeWidth="2" />
      <path d="M19 15h6v6h-6zM31 27h6v6h-6zM31 39h6v6h-6zM31 51h6v6h-6z" fill={G} />
    </>
  ),
};

function ToolBox() {
  return (
    <aside className="flex w-[108px] shrink-0 flex-col pl-2">
      <span className="mt-1.5 h-3 w-24 bg-[radial-gradient(circle,#7d7d7d_1px,transparent_1px)] bg-[size:6px_6px]" />
      <div className="mt-1.5 flex flex-col gap-0.5">
        {Object.keys(tools).map((n) => (
          <IconButton key={n} label={n} size="xl" active={n === "select"}>{tools[n]}</IconButton>
        ))}
      </div>
      <div className="mt-[158px] h-1 w-[72px] bg-[#999999]" />
      <div className="mt-2.5 flex flex-col gap-0.5">
        {Object.keys(layouts).map((n) => (
          <IconButton key={n} label={n} size="xl">{layouts[n]}</IconButton>
        ))}
      </div>
      <svg width="64" height="62" viewBox="0 0 64 62" className="mb-3.5 ml-3.5 mt-auto">
        <defs>
          <linearGradient id="fold" x1="0" y1="0" x2="0" y2="1">
            <stop offset="0" stopColor="#8fdadd" />
            <stop offset="1" stopColor="#0c9aa0" />
          </linearGradient>
        </defs>
        <path d="M0 60V2l14 34v23z" fill="#0aa5a6" />
        <path d="M0 60l14-24v22z" fill="#07777c" />
        <path d="M46 1h18v59H49V30L38 49H27z" fill="#07b3b5" />
        <path d="M49 30l15-28-4 58H49z" fill="#067f86" />
        <path d="M64 2v58L52 46z" fill="#05c3c4" />
        <path d="M0 1l18-1 20 49H27z" fill="url(#fold)" />
      </svg>
    </aside>
  );
}

function SideTab({ children, className }: { children: ReactNode; className?: string }) {
  return (
    <button
      type="button"
      className={clsx("flex shrink-0 rotate-180 items-center justify-center rounded-r-sm border-y-2 border-r-2 border-[#303030] bg-[#3b3b3b] pl-0.5 text-[#999999] [writing-mode:vertical-rl]", className)}
    >
      {children}
    </button>
  );
}

/* ---------- viewports ---------- */

const EDGE = "#00e68c";
const LINE = "#484848";

function AxisLetter({ x, y, color, children }: { x: number; y: number; color: string; children: string }) {
  return (
    <text x={x} y={y} fontSize="19" fontWeight="700" textAnchor="middle" fill={color}>{children}</text>
  );
}

function TopScene() {
  return (
    <>
      <path d="M51 0v706M1521 0v706" stroke={LINE} strokeWidth="2" />
      <path d="M785 0v706M0 353h1571" stroke="#424242" strokeWidth="4" />
      <path d="M513 17h545v672H513z" fill="#a7a7a7" stroke={EDGE} strokeWidth="2" />
      <path d="M513 17h545M513 689h545" stroke={EDGE} strokeWidth="3" />
      <path d="M583 17v672M990 17v672" stroke="#50dc9b" strokeWidth="2" />
      <path d="M51 655h27" stroke="#f00" strokeWidth="2" />
      <path d="M51 655v27" stroke="#1400ff" strokeWidth="2" />
      <AxisLetter x={51} y={652} color="#0f0">y</AxisLetter>
      <AxisLetter x={83} y={652} color="#f00">x</AxisLetter>
      <AxisLetter x={51} y={684} color="#1400ff">z</AxisLetter>
    </>
  );
}

// [y at the left edge, y at the right edge]
const rows = [
  [388, 538], [318, 441], [269, 372], [232, 323], [203, 284], [181, 253], [163, 228], [149, 207], [136, 191], [124, 175],
];
// where each receding line meets the left edge
const leftHits = [564, 424, 339, 282, 241, 209, 185, 165, 148, 135, 123];

function PerspScene() {
  return (
    <>
      <g stroke={LINE} strokeWidth="2">
        {rows.map(([a, b]) => (
          <path key={a} d={`M0 ${a}L1571 ${b}`} />
        ))}
        <path d="M62 116L1571 164M131 109L1571 151M0 686l123 20" />
        {leftHits.map((y) => {
          const far = (y - 105) / ((y + 19) / 1277 + 0.0291);
          return <path key={y} d={`M0 ${y}L${far} ${105 + far * 0.0291}`} />;
        })}
        <path d="M1048 138L192 707M1259 143L1196 707M1373 145L1571 486M1487 147L1571 215" />
        <path d="M1151 139L693 707M0 496L1571 688" strokeWidth="4" stroke="#424242" />
      </g>
      <path d="M595 183L608 652 845 685 849 190z" fill="#9d9d9d" />
      <path d="M849 190L845 685 932 542 941 160z" fill="#5a5a5a" />
      <path d="M898 115L981 85V148L898 195z" fill="#5a5a5a" />
      <path d="M550 105L692 81 981 85 898 115z" fill="#777777" />
      <path d="M550 105L898 115V195L551 181z" fill="#9d9d9d" />
      <g fill="none" stroke="#00f08f" strokeWidth="2">
        <path d="M550 105L692 81 981 85 898 115zM592 107L740 82M849 113L939 86" />
        <path d="M550 105L551 181 898 195V115M898 195L981 148V85" />
        <path d="M594 183L608 652 845 685 849 193M845 685L932 542 941 170" />
        <path d="M592 107L594 183M849 113V193" stroke="#3fe39a" />
      </g>
      <path d="M50 627v30" stroke="#0f0" strokeWidth="2" />
      <path d="M50 656l10 2h16" fill="none" stroke="#f00" strokeWidth="2" />
      <path d="M50 656l-6 3" stroke="#1400ff" strokeWidth="2" />
      <AxisLetter x={50} y={621} color="#0f0">y</AxisLetter>
      <AxisLetter x={81} y={655} color="#f00">x</AxisLetter>
      <AxisLetter x={41} y={660} color="#1400ff">z</AxisLetter>
    </>
  );
}

function FrontScene() {
  return (
    <>
      <path d="M235 0v706M1338 0v706M0 137h1571" stroke={LINE} strokeWidth="2" />
      <path d="M785 0v706M0 686h1571" stroke="#424242" strokeWidth="4" />
      <path d="M583 17h407v87H583zM635 104h302v583H635z" fill="#a7a7a7" />
      <path d="M583 17h407v87H583z" fill="none" stroke="#62d9a2" strokeWidth="1" />
      <path d="M635 17v87M937 17v87" stroke="#50dc9b" strokeWidth="2" />
      <path d="M635 104v583h302V104" fill="none" stroke={EDGE} strokeWidth="2" />
      <path d="M51 626v28" stroke="#0f0" strokeWidth="2" />
      <path d="M51 653h26" stroke="#f00" strokeWidth="2" />
      <AxisLetter x={51} y={620} color="#0f0">y</AxisLetter>
      <AxisLetter x={83} y={650} color="#f00">x</AxisLetter>
      <AxisLetter x={51} y={650} color="#1400ff">z</AxisLetter>
    </>
  );
}

function SideScene() {
  return (
    <>
      <path d="M234 0v706M1335 0v706M0 137h1571" stroke={LINE} strokeWidth="2" />
      <path d="M785 0v706M0 686h1571" stroke="#424242" strokeWidth="4" />
      <path d="M535 17h500v670H535z" fill="#a7a7a7" stroke="#50dc9b" strokeWidth="2" />
      <path d="M535 103h500" stroke="#50dc9b" strokeWidth="2" />
      <path d="M535 687h500" stroke={EDGE} strokeWidth="3" />
      <path d="M51 626v28" stroke="#0f0" strokeWidth="2" />
      <path d="M24 653h27" stroke="#1400ff" strokeWidth="2" />
      <path d="M51 640v10" stroke="#f00" strokeWidth="3" />
      <AxisLetter x={51} y={620} color="#0f0">y</AxisLetter>
      <AxisLetter x={18} y={650} color="#1400ff">z</AxisLetter>
    </>
  );
}

const counts = [
  ["Verts:", 20, 20, 0],
  ["Edges:", 36, 36, 0],
  ["Faces:", 18, 18, 0],
  ["Tris:", 36, 36, 0],
  ["UVs:", 60, 60, 0],
];

const panelMenus = ["View", "Shading", "Lighting", "Show", "Renderer", "Panels"];

const panelGroups = [
  ["camera", "lockCamera", "cameraSettings", "bookmark", "imagePlane", "panZoom", "grease"],
  ["grid", "filmGate", "resGate", "gateMask", "fieldChart", "safeAction", "safeTitle"],
  ["wireframe", "shaded", "material", "wireOnShaded", "textured", "lights", "shadows"],
  ["ao", "motionBlur", "aa", "dof"],
  ["isolate"],
  ["xray", "xrayJoints", "xrayActive"],
];

const panelActive = ["grid", "shaded", "wireOnShaded", "aa"];

function Viewport({ name, active, children }: { name: string; active?: boolean; children: ReactNode }) {
  const slot = <span className="flex w-5 shrink-0 justify-center"><Handle className="h-8" /></span>;
  return (
    <section className={clsx("flex min-h-0 min-w-0 flex-col border", active ? "border-[#808080]" : "border-[#444444]")}>
      <div className="flex h-[38px] gap-8 pl-[17px] leading-8 text-[#c8c8c8]">
        {panelMenus.map((m) => (
          <button type="button" key={m}>{m}</button>
        ))}
      </div>
      <div className="flex h-[39px] items-start gap-0.5 overflow-hidden pl-px">
        {panelGroups.map((group) => (
          <div key={group[0]} className="flex shrink-0 items-center gap-0.5">
            {slot}
            {group.map((n) => (
              <IconButton key={n} label={n} size="sm" active={panelActive.includes(n)}>{panelIcons[n]}</IconButton>
            ))}
          </div>
        ))}
        <div className="flex shrink-0 items-center gap-0.5">
          {slot}
          <IconButton label="Exposure" size="sm">{panelIcons.exposure}</IconButton>
          <Field label="Exposure value" value="0.00" className="mb-1 ml-1 mr-0.5 h-7 w-[78px] pl-2.5" />
          <IconButton label="Gamma" size="sm">{panelIcons.gamma}</IconButton>
          <Field label="Gamma value" value="1.00" className="mb-1 ml-1 mr-0.5 h-7 w-[78px] pl-2.5" />
          <IconButton label="Color management" size="sm" active>{panelIcons.colorMgmt}</IconButton>
          <button type="button" className="ml-1 h-8 rounded-sm bg-[#5d5d5d] pl-1 text-[#c8c8c8]">sR</button>
        </div>
      </div>
      <div className="relative mx-px min-h-0 flex-1 overflow-hidden bg-[#5c5c5c] text-lg font-bold text-white">
        <svg viewBox="0 0 1571 706" preserveAspectRatio="xMidYMid slice" className="absolute inset-0 size-full">
          {children}
        </svg>
        <table className="absolute -top-[3px] left-[30px] leading-10">
          <tbody>
            {counts.map(([label, ...values]) => (
              <tr key={label}>
                <th scope="row" className="w-[96px] text-left">{label}</th>
                {values.map((v, i) => (
                  <td key={i} className="w-[130px] text-right">{v}</td>
                ))}
              </tr>
            ))}
          </tbody>
        </table>
        <span className="absolute inset-x-0 bottom-2.5 pr-4 text-center text-xl">{name}</span>
      </div>
    </section>
  );
}

/* ---------- bottom bars ---------- */

const play: [string, ReactNode][] = [
  ["Go to start", <path d="M4 6h3v28H4zM20 8v24L9 20zM34 8v24L23 20z" fill={G} />],
  ["Step back frame", <path d="M8 6h3v28H8zM32 7v26L14 20z" fill={G} />],
  ["Step back key", <><path d="M12 0v40" stroke={G} strokeWidth="2" /><path d="M9 6h6v28H9z" fill="#f07f38" /><path d="M33 8v24L18 20z" fill={G} /></>],
  ["Play backwards", <path d="M32 4v32L7 20z" fill={G} />],
  ["Play forwards", <path d="M8 4v32l25-16z" fill={G} />],
  ["Step forward key", <><path d="M30 0v40" stroke={G} strokeWidth="2" /><path d="M27 6h6v28h-6z" fill="#f07f38" /><path d="M7 8v24l17-12z" fill={G} /></>],
  ["Step forward frame", <path d="M29 6h3v28h-3zM8 7v26l18-13z" fill={G} />],
  ["Go to end", <path d="M33 6h3v28h-3zM6 8v24l11-12zM20 8v24l11-12z" fill={G} />],
];

const frames = Array.from({ length: 24 }, (_, i) => (i + 1) * 5);
const framePos = (n: number) => `${0.53 + (n - 1) * 0.8247}%`;

function TimeSlider() {
  return (
    <div className="flex h-[78px] items-center border-t-4 border-[#383838]">
      <Grip />
      <div className="relative ml-3 h-[60px] min-w-0 flex-1 overflow-hidden bg-[#2b2b2b] text-[#858585]">
        <div className="absolute inset-y-0 flex w-5 items-end justify-center bg-[#5d5d5d] pb-0.5 text-white" style={{ left: framePos(1) }}>
          1
        </div>
        {frames.map((n) => (
          <div key={n} className="absolute inset-y-0" style={{ left: framePos(n) }}>
            <span className="block pl-1 leading-5">{n}</span>
            <span className="absolute bottom-0 left-0 h-[34px] w-[3px] bg-[#858585]" />
          </div>
        ))}
        <input type="range" aria-label="Current time" min={1} max={120} defaultValue={1} className="absolute inset-0 size-full opacity-0" />
      </div>
      <Field label="Current frame" value="1" className="ml-[15px] h-[35px] w-[174px] pl-2.5" />
      <div className="ml-4 mr-5 flex gap-0.5">
        {play.map(([label, icon]) => (
          <IconButton key={label} label={label}>{icon}</IconButton>
        ))}
      </div>
    </div>
  );
}

function RangeSlider() {
  return (
    <div className="flex h-[68px] items-center border-t-4 border-[#383838]">
      <Grip />
      <Field label="Animation start" value="1" className="ml-3.5 h-[45px] w-[174px] pl-2.5" />
      <Field label="Playback start" value="1" className="ml-[18px] h-[45px] w-[174px] pl-2.5" />
      <div className="ml-4 h-[46px] min-w-0 flex-1 bg-[#383838] px-2 py-1">
        <div className="flex h-[37px] w-8/13 items-center justify-between rounded-sm bg-[#5d5d5d] px-2 text-[#c8c8c8]">
          <span className="flex items-center gap-1.5">
            <button type="button" aria-label="Range start" className="h-6 w-[26px] rounded-md bg-[#919191]" />1
          </span>
          <span className="flex items-center gap-1.5">
            120<button type="button" aria-label="Range end" className="h-6 w-[26px] rounded-md bg-[#919191]" />
          </span>
        </div>
      </div>
      <Field label="Playback end" value="120" className="ml-4 h-[45px] w-[174px] pl-2" />
      <Field label="Animation end" value="200" className="ml-[18px] h-[45px] w-[174px] pl-2" />
      <Handle className="ml-2" />
      <Down className="ml-7" />
      <FlatField className="ml-3 h-[46px] w-[202px]">No Character Set</FlatField>
      <Down className="ml-6" />
      <FlatField className="ml-3 h-[46px] w-[202px]">No Anim Layer</FlatField>
      <Handle className="ml-[18px]" />
      <Dropdown id="fps" label="Frame rate" value="24 fps" className="mb-1 ml-6 h-[38px] w-[202px]" />
      <span className="ml-6">
        <IconButton label="Loop">
          <path d="M5 24v-8c0-4 2-5 5-5h16V6l9 8-9 7v-5H11v8zM35 17v7c0 4-2 5-5 5H14v5l-9-7 9-8v5h15v-7z" fill={G} />
        </IconButton>
      </span>
      <Handle className="mx-5" />
      <IconButton label="Auto keyframe">
        <path d="M6 14C10 4 26 0 33 12M34 26C30 37 14 40 7 28" fill="none" stroke={G} strokeWidth="3" />
        <path d="M3 6v11h10zM37 34V23H27z" fill={G} />
        <path d="M8 20h7M25 20h7" stroke={G} strokeWidth="2" />
        <path d="M18 12h4v17h-4z" fill="#f07f38" />
      </IconButton>
      <span className="ml-3 mr-5">
        <IconButton label="Animation preferences">
          {gear(12, 11, 9, G)}
          <circle cx="33" cy="9" r="4" fill="#f07f38" />
          <path d="M17 17l10-2 5 4-4 8 5 5v8M27 17l-6 11-8 6M32 19l5 3" fill="none" stroke="#f07f38" strokeWidth="4" />
        </IconButton>
      </span>
    </div>
  );
}

function CommandLine() {
  return (
    <div className="flex h-[66px] items-center border-t-4 border-[#383838]">
      <Grip />
      <label htmlFor="mel" className="ml-[34px] w-[70px] text-[#eeeeee]">MEL</label>
      <input id="mel" className="h-[43px] min-w-0 flex-[3] rounded-sm border-t-2 border-[#222222] bg-[#2b2b2b] text-[#cccccc] outline-none" />
      <span className="mx-[5px] h-5 w-1.5 bg-[radial-gradient(circle,#7d7d7d_1px,transparent_1px)] bg-[size:6px_6px]" />
      <output className="h-12 min-w-0 flex-[10] truncate bg-[#2b2b2b] pl-3.5 text-[23px] leading-[50px] text-[#cccccc]">
        // Result: /Users/danielborkow/Desktop/Everything/Personal Artwork/NHSGA/Game Projects/Round 1 - Donkey Kong Remake/Metal Peg/MetalPeg_3D_Finished_DB.mb
      </output>
      <span className="ml-[7px] mr-[15px]">
        <IconButton label="Script editor">
          <path d="M1 2h37v6H1zM1 10h37v28H1z" fill={G} />
          <path d="M3 4h2v2H3zM7 4h2v2H7zM11 4h2v2h-2z" fill={D} />
          <text x="20" y="31" fontSize="20" fontWeight="700" textAnchor="middle" fill={D}>{"{;}"}</text>
        </IconButton>
      </span>
    </div>
  );
}

export default function App() {
  return (
    <div className="flex h-screen flex-col overflow-hidden bg-[#444444] font-['Noto_Sans','Open_Sans',sans-serif] text-[22px] leading-8">
      <MenuBar />
      <StatusLine />
      <div className="h-1 shrink-0 bg-[#383838]" />
      <Shelf />
      <div className="h-1 shrink-0 bg-[#383838]" />
      <main className="flex min-h-0 flex-1">
        <ToolBox />
        <div className="flex w-[42px] shrink-0 flex-col bg-[#383838] pl-1 pt-[3px]">
          <SideTab className="h-[131px] w-[34px]">Outliner</SideTab>
        </div>
        <div className="grid min-w-0 flex-1 grid-cols-2 grid-rows-2 gap-x-[11px] gap-y-2 p-1.5">
          <Viewport name="top -Y"><TopScene /></Viewport>
          <Viewport name="persp"><PerspScene /></Viewport>
          <Viewport name="front -Z" active><FrontScene /></Viewport>
          <Viewport name="side -X"><SideScene /></Viewport>
        </div>
        <div className="flex w-[38px] shrink-0 flex-col gap-1 bg-[#383838] pl-1 pt-[3px]">
          <SideTab className="h-[328px] w-[34px]">Channel Box / Layer Editor</SideTab>
          <SideTab className="h-[227px] w-[34px]">Modeling Toolkit</SideTab>
          <SideTab className="h-[208px] w-[34px]">Attribute Editor</SideTab>
        </div>
      </main>
      <TimeSlider />
      <RangeSlider />
      <CommandLine />
      <footer className="flex h-[50px] shrink-0 items-center border-t-4 border-[#383838] text-[21px] text-[#b8b8b8]">
        <Grip />
        <span className="ml-8">Select Tool: select an object</span>
      </footer>
    </div>
  );
}
